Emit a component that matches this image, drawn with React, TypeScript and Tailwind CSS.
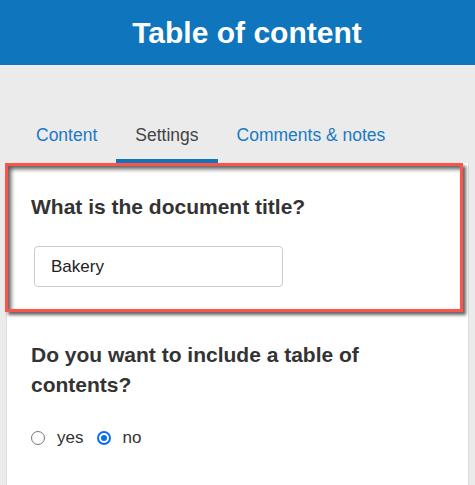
import React from "react";

export default function App() {
  return (
    <div className="w-[475px] min-h-[485px] bg-[#ebebeb] font-['Liberation_Sans',Arial,sans-serif] overflow-hidden">
      <header className="h-[65px] bg-[#0f75bc] flex items-center justify-center pl-[19px] text-white text-[30px] font-bold leading-none">
        Table of content
      </header>
      <nav className="flex pl-[17px] pt-[58px] text-[17.5px] leading-[24px]">
        <div className="px-[19px] pb-[12px] border-b-4 border-transparent text-[#1a7ac4]">Content</div>
        <div className="px-[19px] pb-[12px] border-b-4 border-[#0f75bc] text-[#444]">Settings</div>
        <div className="px-[19px] pb-[12px] border-b-4 border-transparent text-[#1a7ac4]">Comments &amp; notes</div>
      </nav>
      <div className="ml-[6px] w-[463px] min-h-[322px] bg-white border-x border-[#dcdcdc]">
        <section className="relative z-10 -ml-[2px] w-[458px] border-[3px] border-[#fb5549] shadow-[inset_3px_3px_4px_rgba(0,0,0,0.65),3px_3px_3px_rgba(0,0,0,0.6)] pt-[26px] pl-[23px] pb-[22px] bg-white">
          <h2 className="text-[21px] leading-[1.4] font-bold text-[#333]">What is the document title?</h2>
          <div className="mt-[25px] ml-[3px] w-[249px] h-[41px] border border-[#ccc] rounded-[4px] flex items-center pl-[16px] text-[17px] text-[#222]">
            Bakery
          </div>
        </section>
        <section className="pt-[28px] pl-[24px] pr-[40px] pb-[20px]">
          <h2 className="text-[21px] leading-[1.4] font-bold text-[#333]">Do you want to include a table of contents?</h2>
          <div className="mt-[27px] flex items-center h-[24px] text-[17px] text-[#333]">
            <span className="w-[14px] h-[14px] rounded-full border border-[#767676] bg-white" />
            <span className="ml-[12px]">yes</span>
            <span className="ml-[14px] w-[14px] h-[14px] rounded-full border-2 border-[#0b6cf5] bg-white flex items-center justify-center">
              <span className="w-[6px] h-[6px] rounded-full bg-[#0b6cf5]" />
            </span>
            <span className="ml-[11px]">no</span>
          </div>
        </section>
      </div>
    </div>
  );
}
